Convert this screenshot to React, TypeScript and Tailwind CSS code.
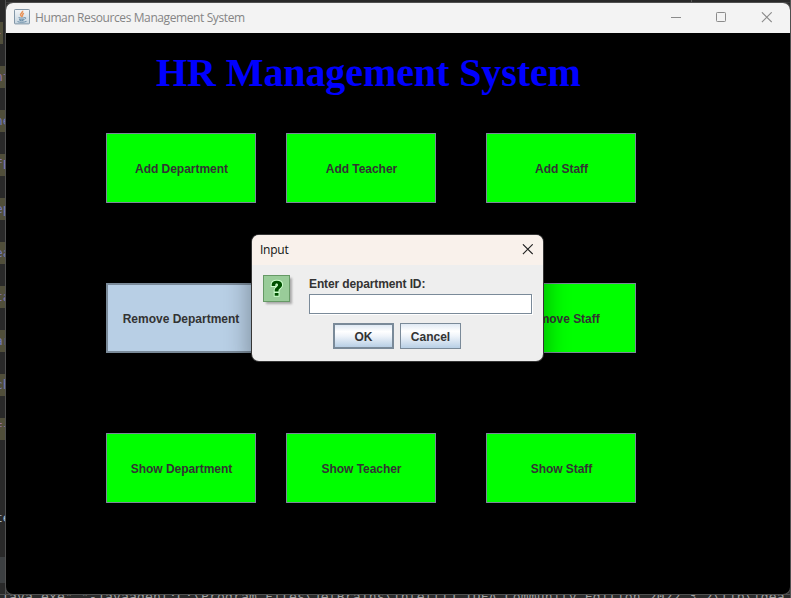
import type { ReactNode } from "react";

const codeRows = [
  { text: "-", tone: "text-[#9373a5]" },
  { text: "nt", tone: "text-[#9373a5]" },
  { text: "ne", tone: "text-[#7377b5]" },
  { text: "fE", tone: "text-[#8375b5]" },
  { text: "ep", tone: "text-[#7377b5]" },
  { text: "ea", tone: "text-[#7377b5]" },
  { text: "ta", tone: "text-[#8375b5]" },
  { text: "ar", tone: "text-[#7377b5]" },
  { text: "ch", tone: "text-[#7377b5]" },
  { text: "ff", tone: "text-[#9373a5]" },
];

function EditorStrip() {
  return (
    <div className="w-[6px] h-[598px] shrink-0 overflow-hidden bg-[#292929] border-r border-[#505050] font-['DejaVu_Sans_Mono',monospace] text-[13px] leading-[22px]">
      <div className="h-[22px]" />
      {codeRows.map((row, i) => (
        <div key={i} className="h-[44px]">
          <div className={(i === 0 ? "w-[3px]" : "w-[5px]") + " h-[22px] overflow-hidden bg-[#504e3a] whitespace-nowrap " + row.tone}>
            <span className="-ml-[5px]">{row.text}</span>
          </div>
        </div>
      ))}
      <div className="h-[45px]" />
      <div className="h-[22px] whitespace-nowrap text-[#a4b8c9]"><span className="-ml-[5px]">te</span></div>
      <div className="h-[28px]" />
      <div className="h-[26px] bg-[#3c3f41]" />
    </div>
  );
}

function SwingButton({ children, selected = false }: { children: ReactNode; selected?: boolean }) {
  return (
    <div
      className={
        "h-[70px] flex items-center justify-center text-[12px] font-bold leading-[14px] text-[#333333] whitespace-nowrap pt-[2px] " +
        (selected ? "border-2 border-[#7a8a99] bg-[#b8cfe5]" : "border border-[#7a8a99] bg-[#00ff00] pl-[1px] tracking-[-0.04px]")
      }
    >
      <span>{children}</span>
    </div>
  );
}

function JavaIcon() {
  return (
    <svg className="w-4 h-4" viewBox="0 0 16 16" fill="none">
      <defs>
        <linearGradient id="javaTile" x1="0" y1="0" x2="0" y2="1">
          <stop stopColor="#f3f5f7" />
          <stop offset="1" stopColor="#c5d4df" />
        </linearGradient>
      </defs>
      <rect x=".5" y=".5" width="15" height="14.4" rx=".7" fill="url(#javaTile)" stroke="#8397a8" />
      <path d="M8.6 1.8c.8 2-3.3 2.7-1.9 4.6L8 8M10 4.2C7.6 5.2 8.8 6 8.3 7.7" stroke="#e8935a" strokeWidth="1.5" />
      <path d="M4.6 8.6c1.8.7 4.8.6 6-.1M5 10.2c1.5.6 3.6.6 5 0M5.5 11.4c1.4.5 3 .4 4 0M10.5 8.6c2-.4 1.5 1.3-.2 1.7M3.5 12.6c1.8.9 6.5.9 9-.2" stroke="#6a8da8" strokeWidth="1" />
    </svg>
  );
}

function QuestionIcon() {
  return (
    <svg className="w-8 h-8" viewBox="0 0 32 32">
      <defs>
        <filter id="tileShade" x="-20%" y="-20%" width="150%" height="150%"><feGaussianBlur stdDeviation="1.2" /></filter>
      </defs>
      <rect x="3" y="3" width="26" height="26" fill="#909090" opacity=".75" filter="url(#tileShade)" />
      <rect x=".5" y=".5" width="26" height="26" fill="#99cc99" stroke="#669966" />
      <path
        d="M8.7 11V9.5c0-2.5 1.9-3.8 5-3.8 3.4 0 5.4 1.5 5.4 4.1 0 3.3-3.6 3.6-3.6 5.9v.8h-3.8v-1.2c0-2.8 3.3-3.2 3.3-5.3 0-1.1-.5-1.6-1.4-1.6s-1.3.6-1.3 1.7v.9zM11.7 18h3.8v2.8h-3.8z"
        fill="#005000"
        stroke="#ccffcc"
        strokeWidth="2"
        paintOrder="stroke"
      />
    </svg>
  );
}

function InputDialog() {
  return (
    <section className="absolute left-[252px] top-[235px] w-[291px] h-[126px] rounded-[7px] bg-[#eeeeee] shadow-[0_0_0_1px_#353535,0_8px_24px_3px_rgba(0,0,0,0.32)] overflow-hidden">
      <header className="h-[30px] bg-[#f9f1eb] flex justify-between items-start pl-[8px] pr-[10px]">
        <span className="font-['Open_Sans','Noto_Sans',sans-serif] text-[12px] leading-[17px] pt-[6px] tracking-[-0.25px] text-[#111111]">Input</span>
        <svg className="w-[11px] h-[11px] mt-[9px]" viewBox="0 0 11 11"><path d="M.9.3l9.8 9.8M10.7.3L.9 10.1" stroke="#222" strokeWidth="1.1" /></svg>
      </header>
      <div className="flex pt-[10px] pl-[11px]">
        <QuestionIcon />
        <div className="ml-[14px] w-[223px] text-[12px] leading-[14px] font-bold text-[#333333] pt-[2px]">
          <label className="block tracking-[-0.12px]">Enter department ID:</label>
          <div className="mt-[3px] h-[20px] border border-[#7a8a99] bg-white shadow-[1px_1px_0_#ffffff]" />
        </div>
      </div>
      <div className="flex gap-[6px] pl-[81px] pt-[9px] text-[12px] leading-[14px] font-bold text-[#333333]">
        <div className="w-[61px] h-[26px] border-2 border-[#7a8a99] bg-[linear-gradient(#dfe9f4_0%,#ffffff_30%,#eff4fa_50%,#b8cfe5_100%)] flex items-center justify-center pt-[1px]"><span>OK</span></div>
        <div className="w-[61px] h-[26px] border border-[#7a8a99] bg-[linear-gradient(#dfe9f4_0%,#ffffff_30%,#eff4fa_50%,#b8cfe5_100%)] flex items-center justify-center pt-[1px]"><span>Cancel</span></div>
      </div>
    </section>
  );
}

export default function App() {
  return (
    <main className="relative w-[791px] h-[598px] overflow-hidden bg-[#2b2b2b] flex font-['Liberation_Sans',Arial,sans-serif]">
      <EditorStrip />
      <div className="w-[785px] h-[598px] shrink-0 border-r border-[#555555]">
        <div className="h-[3px] bg-[#292929] border-b border-[#3c3c3c]"><div className="ml-[685px] w-px h-[2px] bg-[#555555]" /></div>
        <section className="w-[784px] h-[591px] rounded-[7px] overflow-hidden bg-black shadow-[0_0_0_1px_#505050]">
          <header className="h-[30px] bg-[#f3f3f3] flex items-start pl-[8px] pr-[18px]">
            <div className="pt-[6px]"><JavaIcon /></div>
            <h2 className="ml-[5px] pt-[6px] font-['Open_Sans','Noto_Sans',sans-serif] text-[12px] leading-[17px] tracking-[-0.4px] text-[#858585] whitespace-nowrap">Human Resources Management System</h2>
            <div className="ml-auto flex items-start gap-[35px] pt-[9px]">
              <svg className="w-[10px] h-[10px]" viewBox="0 0 10 10"><path d="M0 5.5h10" stroke="#8b8b8b" /></svg>
              <svg className="w-[10px] h-[10px]" viewBox="0 0 10 10" fill="none"><rect x=".5" y=".5" width="9" height="9" rx=".8" stroke="#8b8b8b" /></svg>
              <svg className="w-[11px] h-[11px]" viewBox="0 0 11 11"><path d="M.9.3l9.8 9.8M10.7.3L.9 10.1" stroke="#8b8b8b" strokeWidth="1.1" /></svg>
            </div>
          </header>
          <h1 className="h-[100px] pt-[17px] pl-[150px] font-['Liberation_Serif','Times_New_Roman',serif] text-[40px] leading-[46px] tracking-[-0.09px] font-bold text-[#0000ff] whitespace-nowrap">HR Management System</h1>
          <div className="ml-[100px] grid grid-cols-[150px_150px_150px] gap-x-[30px] gap-y-[80px] w-[530px]">
            <SwingButton>Add Department</SwingButton>
            <SwingButton>Add Teacher</SwingButton>
            <div className="ml-[20px] w-[150px]"><SwingButton>Add Staff</SwingButton></div>
            <SwingButton selected>Remove Department</SwingButton>
            <SwingButton>Remove Teacher</SwingButton>
            <div className="ml-[20px] w-[150px]"><SwingButton>Remove Staff</SwingButton></div>
            <SwingButton>Show Department</SwingButton>
            <SwingButton>Show Teacher</SwingButton>
            <div className="ml-[20px] w-[150px]"><SwingButton>Show Staff</SwingButton></div>
          </div>
        </section>
        <div className="-ml-[6px] h-[4px] border-t border-[#505050] overflow-hidden font-['DejaVu_Sans_Mono',monospace] text-[13px] leading-[16px] tracking-[0.17px] text-[#a0a0a0]">
          <div className="-mt-[6px] pl-[1px] whitespace-nowrap">{'java.exe" "-javaagent:C:\\Program Files\\JetBrains\\IntelliJ IDEA Community Edition 2022.3.2\\lib\\idea'}</div>
        </div>
      </div>
      <InputDialog />
    </main>
  );
}
